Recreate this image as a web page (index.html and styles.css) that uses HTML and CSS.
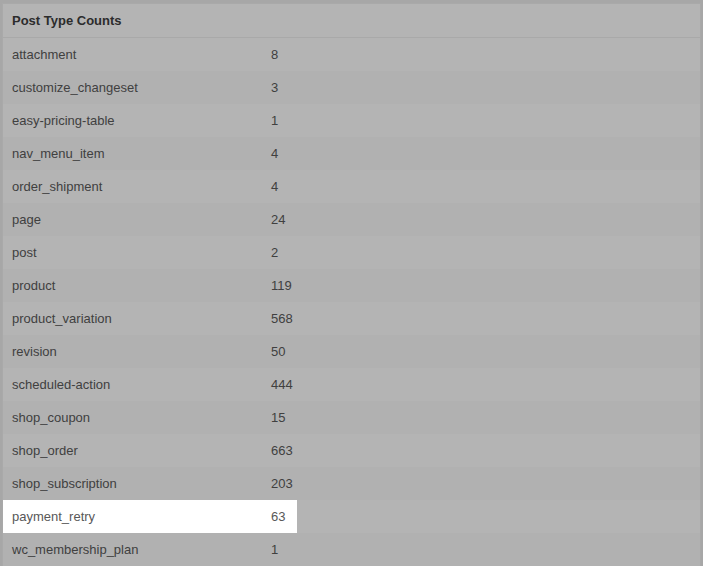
FILE: index.html
```html
<!DOCTYPE html>
<html>
<head>
<meta charset="utf-8">
<link rel="stylesheet" href="styles.css">
</head>
<body>
<div class="panel">
  <div class="head">Post Type Counts</div>
  <div class="row"><span class="name">attachment</span><span class="val">8</span></div>
  <div class="row alt"><span class="name">customize_changeset</span><span class="val">3</span></div>
  <div class="row"><span class="name">easy-pricing-table</span><span class="val">1</span></div>
  <div class="row alt"><span class="name">nav_menu_item</span><span class="val">4</span></div>
  <div class="row"><span class="name">order_shipment</span><span class="val">4</span></div>
  <div class="row alt"><span class="name">page</span><span class="val">24</span></div>
  <div class="row"><span class="name">post</span><span class="val">2</span></div>
  <div class="row alt"><span class="name">product</span><span class="val">119</span></div>
  <div class="row"><span class="name">product_variation</span><span class="val">568</span></div>
  <div class="row alt"><span class="name">revision</span><span class="val">50</span></div>
  <div class="row"><span class="name">scheduled-action</span><span class="val">444</span></div>
  <div class="row alt"><span class="name">shop_coupon</span><span class="val">15</span></div>
  <div class="row"><span class="name">shop_order</span><span class="val">663</span></div>
  <div class="row alt"><span class="name">shop_subscription</span><span class="val">203</span></div>
  <div class="row highlight"><div class="hl"><span class="name">payment_retry</span><span class="val">63</span></div></div>
  <div class="row alt"><span class="name">wc_membership_plan</span><span class="val">1</span></div>
</div>
</body>
</html>
```
FILE: styles.css
```css
html, body {
  margin: 0;
  padding: 0;
  background: #a7a7a7;
  font-family: "Liberation Sans", Arial, sans-serif;
  font-size: 13px;
}
body {
  padding: 3px 2px 0 2px;
  height: 566px;
  box-sizing: border-box;
  overflow: hidden;
}
.panel {
  background: #b4b4b4;
  border: 1px solid #a9a9a9;
  border-bottom: none;
  width: 697px;
}
.head {
  height: 33px;
  line-height: 33px;
  padding-left: 9px;
  font-weight: 700;
  color: #2c2c2c;
  border-bottom: 1px solid #a9a9a9;
}
.row {
  display: flex;
  height: 32px;
  padding-top: 1px;
  line-height: 32px;
  color: #404040;
}
.row.alt {
  background: #b1b1b1;
}
.row .name {
  display: block;
  width: 268px;
  padding-left: 9px;
  box-sizing: border-box;
}
.row .val {
  display: block;
}
.row.highlight {
  padding-top: 0;
  height: 33px;
}
.hl {
  display: flex;
  width: 294px;
  padding-top: 1px;
  background: #ffffff;
  color: #585858;
}
```
